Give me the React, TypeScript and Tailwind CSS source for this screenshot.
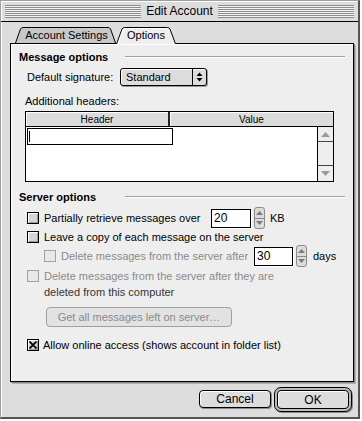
import React from 'react';

const stripes =
  'flex-1 h-[13px] bg-[repeating-linear-gradient(to_bottom,#8c8c8c_0px,#8c8c8c_1px,#f4f4f4_1px,#f4f4f4_2px)]';

const Checkbox: React.FC<{ checked?: boolean; disabled?: boolean }> = ({ checked, disabled }) => (
  <div
    className={`w-[12px] h-[12px] shrink-0 flex items-center justify-center border ${
      disabled
        ? 'border-[#a0a0a0] bg-[#e8e8e8]'
        : 'border-black bg-[#d6d6d6] shadow-[inset_1px_1px_0_#fff,inset_-1px_-1px_0_#999]'
    }`}
  >
    {checked && (
      <svg width="8" height="8" viewBox="0 0 8 8">
        <path d="M0.5 0.5 L7.5 7.5 M7.5 0.5 L0.5 7.5" stroke="black" strokeWidth="1.8" />
      </svg>
    )}
  </div>
);

const Stepper: React.FC = () => (
  <div className="w-[11px] h-[22px] flex flex-col rounded-[3px] border border-[#8a8a8a] bg-[#dcdcdc] overflow-hidden">
    <div className="flex-1 flex items-center justify-center border-b border-[#8a8a8a]">
      <svg width="7" height="4" viewBox="0 0 7 4">
        <path d="M3.5 0 L7 4 L0 4 Z" fill="#7a7a7a" />
      </svg>
    </div>
    <div className="flex-1 flex items-center justify-center">
      <svg width="7" height="4" viewBox="0 0 7 4">
        <path d="M0 0 L7 0 L3.5 4 Z" fill="#7a7a7a" />
      </svg>
    </div>
  </div>
);

const Heading: React.FC<{ children: React.ReactNode }> = ({ children }) => (
  <div className="flex items-center h-[14px]">
    <span className="w-[106px] font-bold">{children}</span>
    <div className="flex-1 h-[2px] border-t border-t-[#a0a0a0] border-b border-b-white" />
  </div>
);

const NumberField: React.FC<{ value: string; width: string }> = ({ value, width }) => (
  <div
    className={`${width} h-[19px] bg-white border border-black shadow-[1px_1px_0_#fff] flex items-center pl-[2px] text-[12px]`}
  >
    {value}
  </div>
);

const App: React.FC = () => {
  return (
    <div className="w-[362px] h-[421px] bg-white font-['Liberation_Sans',Arial,sans-serif] text-black text-[11px] leading-[14px]">
      <div className="w-[360px] h-[419px] bg-[#dddddd] border-l border-t border-l-[#a0a0a0] border-t-[#a0a0a0] border-r-2 border-b-2 border-r-[#555] border-b-[#555] shadow-[inset_1px_1px_0_#fff] flex flex-col">
        {/* title bar */}
        <div className="h-[21px] shrink-0 border-b border-black flex items-center px-[4px] gap-[4px]">
          <div className={stripes} />
          <span className="text-[12px] px-[1px]">Edit Account</span>
          <div className={stripes} />
        </div>

        {/* tabs */}
        <div className="pt-[5px] flex items-end h-[21px] shrink-0 pl-[14px] relative z-10">
          <div className="relative w-[101px] h-[16px] flex items-center justify-center">
            <svg className="absolute inset-0" width="101" height="16" viewBox="0 0 101 16">
              <path d="M0.5 16 L5.5 2 Q6.5 0.5 8 0.5 L93 0.5 Q94.5 0.5 95.5 2 L100.5 16 Z" fill="#c8c8c8" />
              <path d="M0.5 16 L5.5 2 Q6.5 0.5 8 0.5 L93 0.5 Q94.5 0.5 95.5 2 L100.5 16" fill="none" stroke="black" />
            </svg>
            <span className="relative pl-[2px]">Account Settings</span>
          </div>
          <div className="relative w-[60px] h-[17px] -mb-[1px] flex items-center justify-center pb-[1px]">
            <svg className="absolute inset-0" width="60" height="17" viewBox="0 0 60 17">
              <path d="M0.5 17 L6 2 Q7 0.5 8.5 0.5 L51.5 0.5 Q53 0.5 54 2 L59.5 17 Z" fill="#eeeeee" />
              <path d="M2 17 L7 3 Q7.8 1.5 9 1.5 L51 1.5" fill="none" stroke="#fff" />
              <path d="M0.5 17 L6 2 Q7 0.5 8.5 0.5 L51.5 0.5 Q53 0.5 54 2 L59.5 17" fill="none" stroke="black" />
            </svg>
            <span className="relative">Options</span>
          </div>
        </div>

        {/* panel */}
        <div className="ml-[9px] w-[344px] h-[339px] shrink-0 bg-[#eeeeee] border border-black shadow-[inset_1px_1px_0_#fff,1px_1px_0_#888,2px_2px_0_#b0b0b0] pt-[6px] pl-[8px] pr-[8px] flex flex-col">
          <Heading>Message options</Heading>

          <div className="mt-[4px] pl-[8px] flex items-center h-[18px]">
            <span className="w-[93px]">Default signature:</span>
            <div className="w-[87px] h-[18px] flex rounded-[3px] border border-black bg-[#dcdcdc] shadow-[inset_1px_1px_0_#fff,1px_1px_0_#999]">
              <div className="flex-1 flex items-center pl-[5px]">Standard</div>
              <div className="w-[14px] border-l border-black flex items-center justify-center">
                <svg width="7" height="10" viewBox="0 0 7 10">
                  <path d="M3.5 0.5 L6.5 4 L0.5 4 Z M0.5 6 L6.5 6 L3.5 9.5 Z" fill="black" />
                </svg>
              </div>
            </div>
          </div>

          <div className="mt-[8px] pl-[6px]">Additional headers:</div>

          <div className="mt-[3px] ml-[6px] w-[309px] h-[71px] border border-black flex flex-col bg-white">
            <div className="h-[15px] shrink-0 flex border-b border-black text-[10px] leading-[13px]">
              <div className="w-[144px] bg-[#dcdcdc] shadow-[inset_1px_1px_0_#fff] flex items-center justify-center border-r-2 border-r-[#222]">
                Header
              </div>
              <div className="flex-1 bg-[#dcdcdc] shadow-[inset_1px_1px_0_#fff] flex items-center justify-center">
                Value
              </div>
            </div>
            <div className="flex-1 flex">
              <div className="flex-1 pt-[1px] pl-[1px]">
                <div className="w-[146px] h-[17px] border border-black flex items-center pl-[1px]">
                  <div className="w-[1px] h-[11px] bg-black" />
                </div>
              </div>
              <div className="w-[16px] border-l border-black bg-[#eeeeee] flex flex-col">
                <div className="h-[15px] border-b border-[#444] flex items-center justify-center">
                  <svg width="9" height="5" viewBox="0 0 9 5">
                    <path d="M4.5 0 L9 5 L0 5 Z" fill="#9a9a9a" />
                  </svg>
                </div>
                <div className="flex-1" />
                <div className="h-[16px] border-t border-[#444] flex items-center justify-center">
                  <svg width="9" height="5" viewBox="0 0 9 5">
                    <path d="M0 0 L9 0 L4.5 5 Z" fill="#9a9a9a" />
                  </svg>
                </div>
              </div>
            </div>
          </div>

          <div className="mt-[8px]">
            <Heading>Server options</Heading>
          </div>

          <div className="mt-[3px] pl-[8px] flex items-center h-[22px]">
            <Checkbox />
            <span className="ml-[5px] w-[167px]">Partially retrieve messages over</span>
            <NumberField value="20" width="w-[40px]" />
            <div className="ml-[3px]">
              <Stepper />
            </div>
            <span className="ml-[5px]">KB</span>
          </div>

          <div className="mt-[1px] pl-[8px] flex items-center h-[14px]">
            <Checkbox />
            <span className="ml-[5px]">Leave a copy of each message on the server</span>
          </div>

          <div className="mt-[1px] pl-[25px] flex items-center h-[22px]">
            <Checkbox disabled />
            <span className="ml-[5px] w-[193px] text-[#8a8a8a]">Delete messages from the server after</span>
            <NumberField value="30" width="w-[39px]" />
            <div className="ml-[3px]">
              <Stepper />
            </div>
            <span className="ml-[6px]">days</span>
          </div>

          <div className="mt-[1px] pl-[8px] flex items-start leading-[16px]">
            <div className="mt-[2px]">
              <Checkbox disabled />
            </div>
            <div className="ml-[5px]">
              <div className="text-[#8a8a8a]">Delete messages from the server after they are</div>
              <div className="text-[#333]">deleted from this computer</div>
            </div>
          </div>

          <div className="mt-[7px] ml-[27px] w-[186px] h-[20px] rounded-[4px] border border-[#a0a0a0] bg-[#e2e2e2] flex items-center justify-center text-[#8a8a8a]">
            Get all messages left on server…
          </div>

          <div className="mt-[11px] pl-[8px] flex items-center h-[14px]">
            <Checkbox checked />
            <span className="ml-[4px]">Allow online access (shows account in folder list)</span>
          </div>
        </div>

        {/* buttons */}
        <div className="mt-[5px] flex items-start justify-end pr-[6px] gap-[3px] text-[12px]">
          <div className="mt-[3px] w-[72px] h-[18px] rounded-[4px] border border-black bg-[#dddddd] shadow-[inset_1px_1px_0_#fff,1px_1px_0_#888] flex items-center justify-center">
            Cancel
          </div>
          <div className="w-[78px] h-[25px] rounded-[7px] border border-black bg-[#bbbbbb] shadow-[1px_1px_0_#888] p-[2px]">
            <div className="w-full h-full rounded-[4px] border border-black bg-[#dddddd] shadow-[inset_1px_1px_0_#fff] flex items-center justify-center">
              OK
            </div>
          </div>
        </div>
      </div>
    </div>
  );
};

export default App;
